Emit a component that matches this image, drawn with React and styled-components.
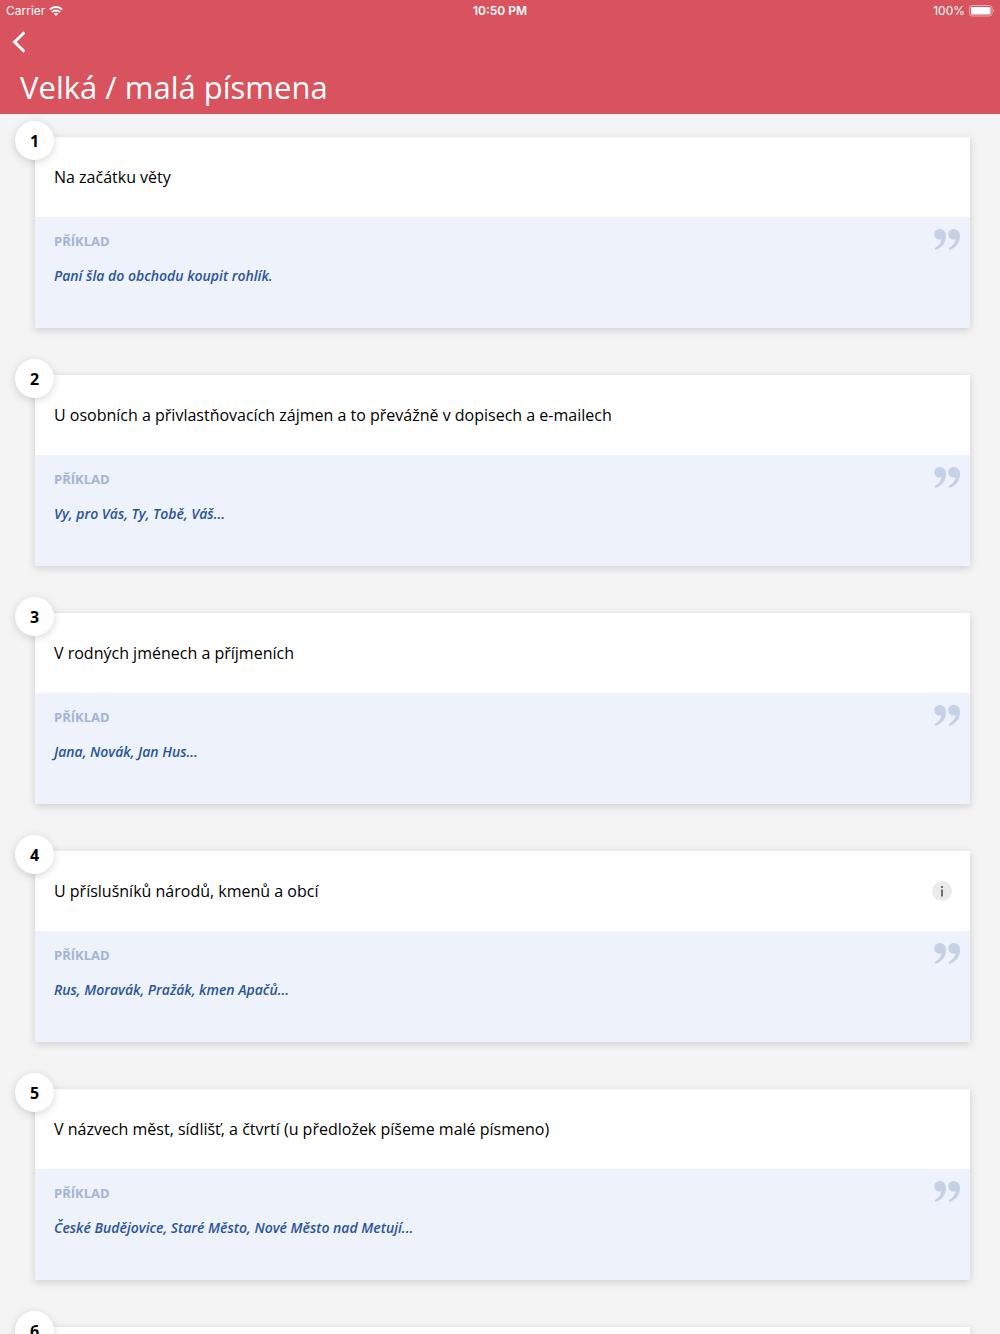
import styled, { createGlobalStyle } from 'styled-components';

const rules = [
  { title: 'Na začátku věty', example: 'Paní šla do obchodu koupit rohlík.' },
  {
    title: 'U osobních a přivlastňovacích zájmen a to převážně v dopisech a e-mailech',
    example: 'Vy, pro Vás, Ty, Tobě, Váš...',
  },
  { title: 'V rodných jménech a příjmeních', example: 'Jana, Novák, Jan Hus...' },
  {
    title: 'U příslušníků národů, kmenů a obcí',
    example: 'Rus, Moravák, Pražák, kmen Apačů...',
    info: true,
  },
  {
    title: 'V názvech měst, sídlišť, a čtvrtí (u předložek píšeme malé písmeno)',
    example: 'České Budějovice, Staré Město, Nové Město nad Metují...',
  },
  { title: '', example: '' },
];

export default function App() {
  return (
    <Screen>
      <GlobalStyle />
      <Header>
        <StatusBar>
          <Carrier>
            Carrier
            <WifiIcon />
          </Carrier>
          <Clock>10:50 PM</Clock>
          <Battery>
            100%
            <BatteryIcon />
          </Battery>
        </StatusBar>
        <BackButton type="button" aria-label="Zpět">
          <svg width="14" height="22" viewBox="0 0 14 22" fill="none">
            <path d="M11.5 2.2L2.6 11l8.9 8.8" stroke="#fff" strokeWidth="3" strokeLinecap="round" strokeLinejoin="miter" />
          </svg>
        </BackButton>
        <Title>Velká / malá písmena</Title>
      </Header>
      <List>
        {rules.map((rule, i) => (
          <Card key={i}>
            <Badge>{i + 1}</Badge>
            <Rule>
              <RuleText>{rule.title}</RuleText>
              {rule.info && (
                <InfoButton type="button" aria-label="Více informací">
                  <InfoIcon />
                </InfoButton>
              )}
            </Rule>
            {rule.example && (
              <Example>
                <div>
                  <ExampleLabel>PŘÍKLAD</ExampleLabel>
                  <ExampleText>{rule.example}</ExampleText>
                </div>
                <QuoteIcon />
              </Example>
            )}
          </Card>
        ))}
      </List>
    </Screen>
  );
}

function WifiIcon() {
  return (
    <svg width="14" height="10" viewBox="0 0 14 10" fill="none" stroke="#fff" strokeWidth="2">
      <path d="M0.8 3.6A8.9 8.9 0 0 1 13.2 3.6" />
      <path d="M3 6.1A5.8 5.8 0 0 1 11 6.1" />
      <path d="M7 10L4.9 7.8A3 3 0 0 1 9.1 7.8Z" fill="#fff" stroke="none" />
    </svg>
  );
}

function BatteryIcon() {
  return (
    <svg width="25" height="12" viewBox="0 0 25 12">
      <rect x="0.5" y="0.5" width="22.5" height="10.5" rx="2.5" fill="none" stroke="#fff" strokeOpacity="0.5" />
      <rect x="2" y="2" width="19.5" height="7.5" rx="1" fill="#fff" />
      <path d="M24 4v3.6c.7-.4 1-1.1 1-1.8s-.3-1.400-1-1.8z" fill="#fff" fillOpacity="0.5" />
    </svg>
  );
}

function QuoteIcon() {
  return (
    <svg width="26" height="21" viewBox="0 0 26 21" fill="#c7d1e6">
      <path d="M5.6 0C9.5 0 12 3 12 7.2C12 13.4 8 18.4 2.2 20.8C1 21.2 .2 19.4 1.2 18.8C4.800 16.600 7 13.600 7.500 10.200C7 10.400 6.300 10.600 5.600 10.600C2.500 10.600 .3 8.300 .3 5.300C.3 2.300 2.600 0 5.600 0Z" />
      <path d="M19.600 0C23.500 0 26 3 26 7.200C26 13.400 22 18.400 16.200 20.800C15 21.200 14.200 19.400 15.200 18.800C18.800 16.600 21 13.600 21.500 10.200C21 10.400 20.300 10.600 19.600 10.600C16.500 10.600 14.300 8.300 14.300 5.300C14.300 2.300 16.600 0 19.600 0Z" />
    </svg>
  );
}

function InfoIcon() {
  return (
    <svg width="20" height="20" viewBox="0 0 20 20" fill="#6e6e6e">
      <rect x="9" y="5" width="2" height="2" />
      <rect x="9" y="8.5" width="2" height="7" />
    </svg>
  );
}

const GlobalStyle = createGlobalStyle`
  * {
    box-sizing: border-box;
  }
  body {
    margin: 0;
    background: #f4f4f4;
    font-family: "Open Sans", sans-serif;
  }
`;

const Screen = styled.div`
  display: flex;
  flex-direction: column;
  height: 100vh;
  background: #f4f4f4;
`;

const Header = styled.header`
  flex-shrink: 0;
  background: #d8535e;
  color: #fff;
`;

const StatusBar = styled.div`
  display: grid;
  grid-template-columns: 1fr auto 1fr;
  align-items: center;
  height: 21px;
  padding: 0 6px;
  font-family: Inter, sans-serif;
  font-size: 12px;
  line-height: 20px;
`;

const Carrier = styled.div`
  display: flex;
  align-items: center;
  gap: 4px;
`;

const Clock = styled.div`
  font-weight: 600;
`;

const Battery = styled.div`
  display: flex;
  align-items: center;
  justify-content: flex-end;
  gap: 4px;
`;

const BackButton = styled.button`
  display: flex;
  align-items: center;
  height: 42px;
  padding: 0 12px;
  border: none;
  background: none;
  cursor: pointer;
`;

const Title = styled.h1`
  margin: 0;
  padding: 0 20px 3px;
  font-size: 31px;
  font-weight: 400;
  line-height: 48px;
`;

const List = styled.main`
  flex: 1;
  display: flex;
  flex-direction: column;
  gap: 47px;
  min-height: 0;
  padding: 23px 30px 23px 35px;
  overflow-y: auto;
  scrollbar-width: none;
`;

const Card = styled.section`
  position: relative;
  flex-shrink: 0;
  background: #fff;
  box-shadow: 0 2px 8px rgba(0, 0, 0, 0.16);
`;

const Badge = styled.div`
  position: absolute;
  top: -16px;
  left: -20px;
  display: flex;
  align-items: center;
  justify-content: center;
  width: 39px;
  height: 39px;
  border-radius: 50%;
  background: #fff;
  box-shadow: 0 2px 8px rgba(0, 0, 0, 0.16);
  font-size: 16px;
  font-weight: 700;
`;

const Rule = styled.div`
  display: flex;
  align-items: center;
  justify-content: space-between;
  min-height: 80px;
  padding: 0 18px 0 19px;
`;

const RuleText = styled.h2`
  margin: 0;
  color: #000;
  font-size: 16px;
  font-weight: 400;
  line-height: 24px;
`;

const InfoButton = styled.button`
  display: flex;
  padding: 0;
  border: none;
  border-radius: 50%;
  background: #eaeaea;
  cursor: pointer;
`;

const Example = styled.div`
  display: flex;
  align-items: flex-start;
  justify-content: space-between;
  min-height: 111px;
  padding: 12px 10px 12px 19px;
  background: #edf2fb;
`;

const ExampleLabel = styled.div`
  color: #a3b4d6;
  font-size: 13px;
  font-weight: 700;
  line-height: 24px;
`;

const ExampleText = styled.p`
  margin: 11px 0 0;
  color: #2b5499;
  font-size: 14px;
  font-style: italic;
  font-weight: 600;
  line-height: 24px;
`;
